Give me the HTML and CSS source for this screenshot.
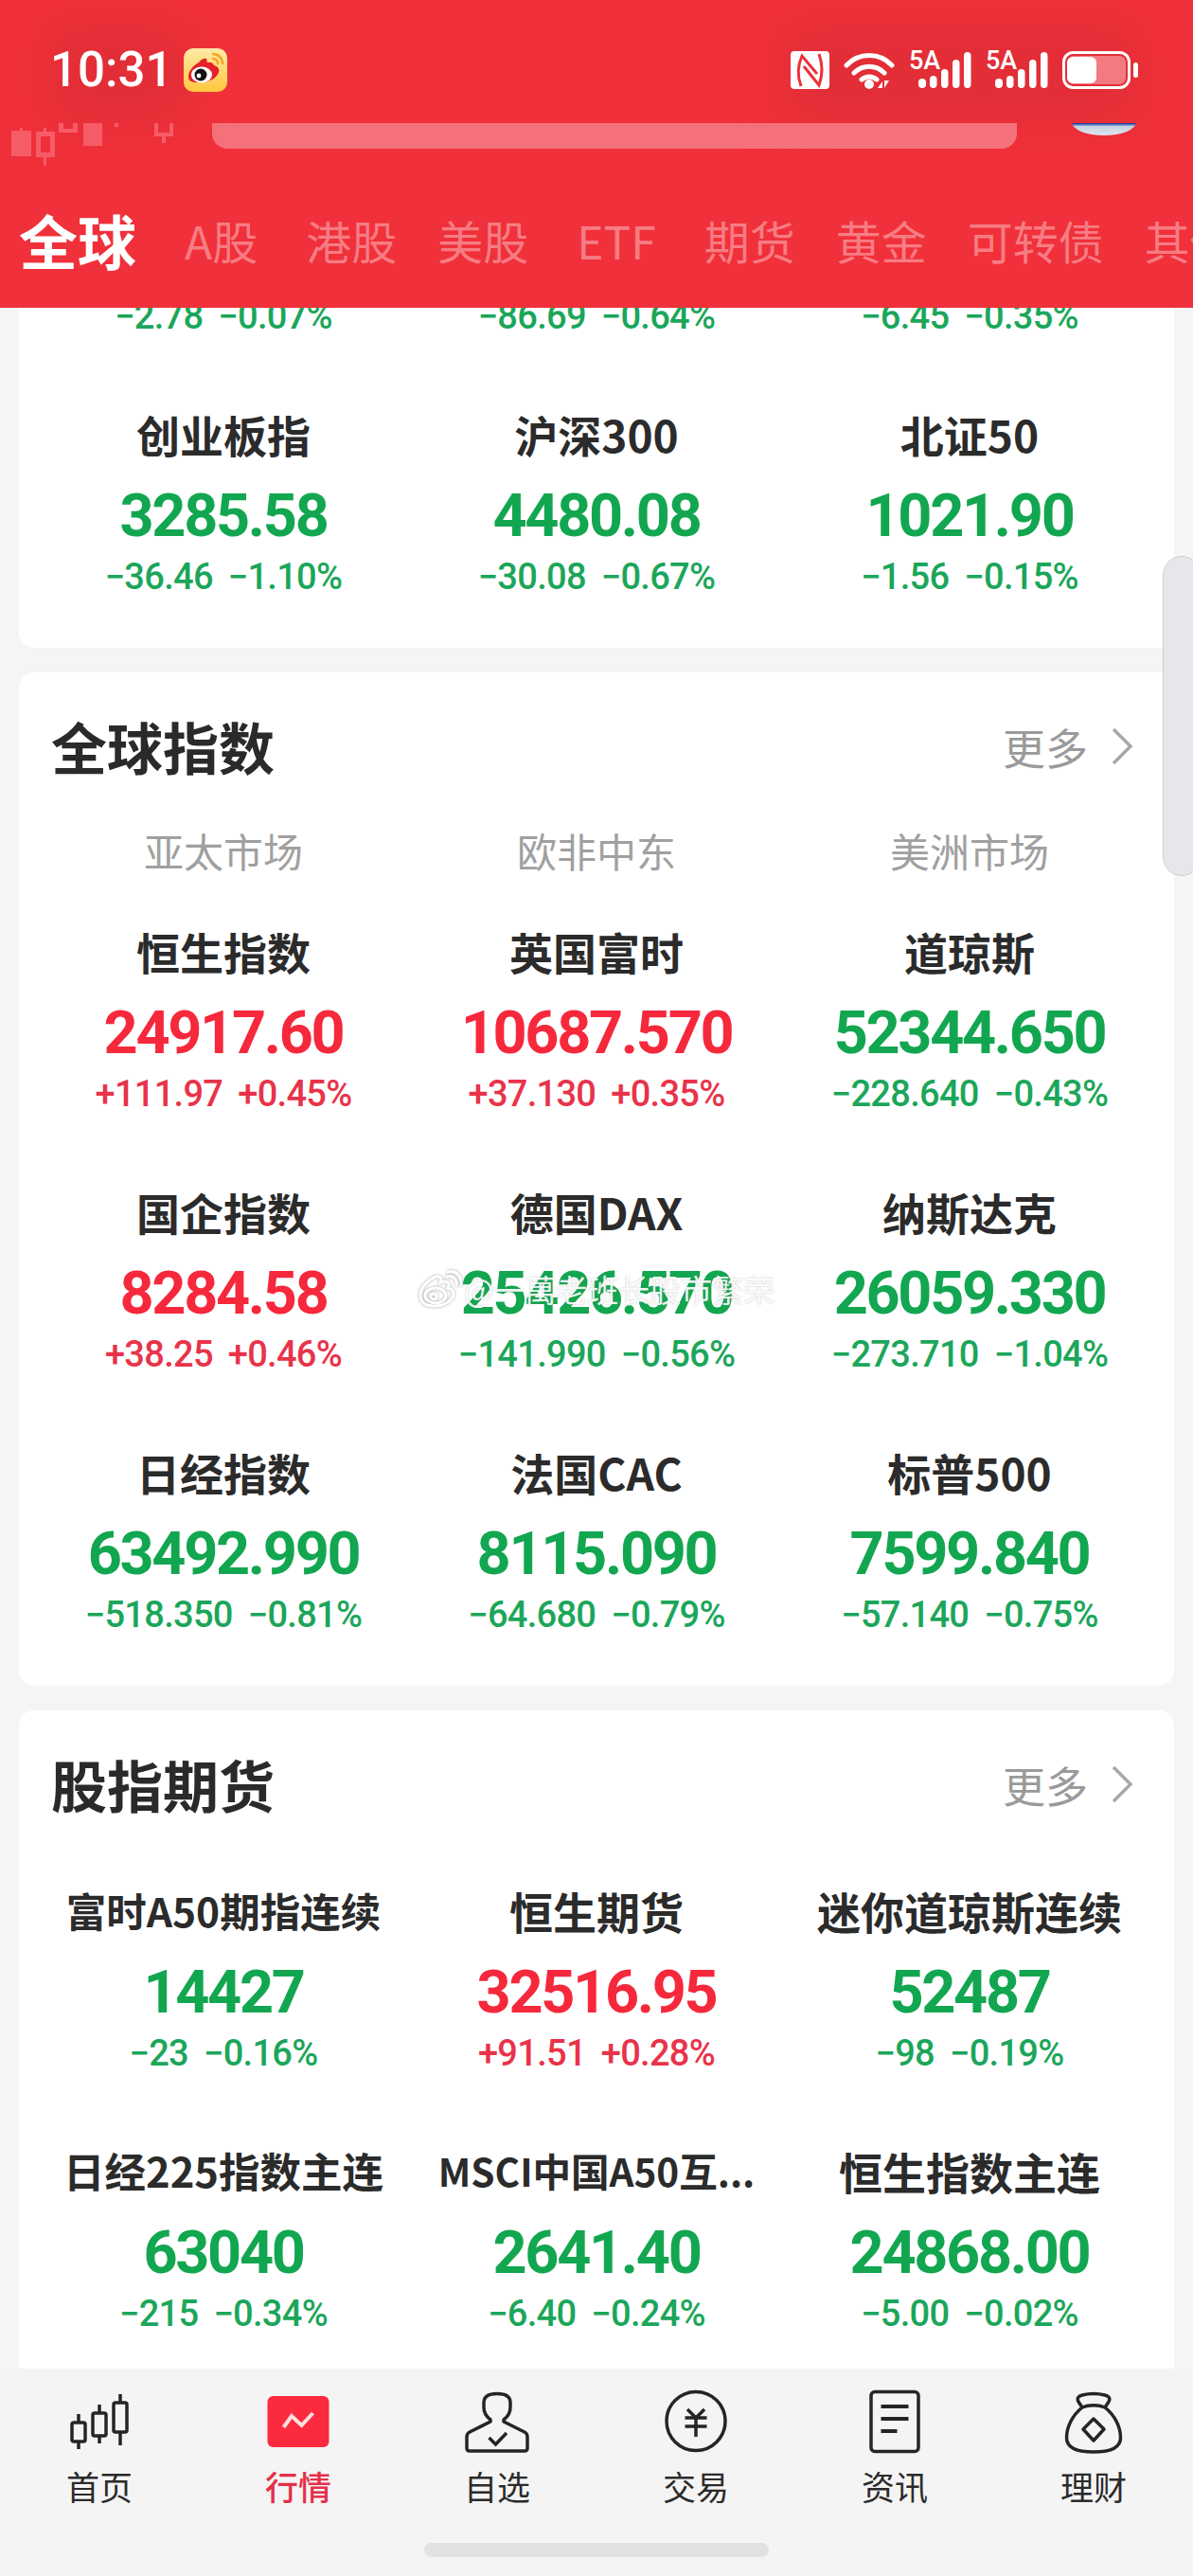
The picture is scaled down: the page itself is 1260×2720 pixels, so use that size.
FILE: index.html
```html
<!DOCTYPE html>
<html lang="zh-CN">
<head>
<meta charset="utf-8">
<title>行情</title>
<link rel="stylesheet" href="styles.css">
</head>
<body>
<div class="app">
  <header class="top">
    <div class="shade shade-left"></div>
    <div class="shade shade-right"></div>
    <div class="status">
      <div class="status-left">
        <span class="clock">10:31</span>
        <svg class="weibo-app" viewBox="0 0 46 46" width="46" height="46">
          <defs><linearGradient id="wy" x1="0" y1="0" x2="0" y2="1"><stop offset="0" stop-color="#ffeaa6"/><stop offset="1" stop-color="#ffc83c"/></linearGradient></defs>
          <rect width="46" height="46" rx="10" fill="url(#wy)"/>
          <path d="M31 6a10 10 0 0 1 10 10M31 11a5 5 0 0 1 5 5" fill="none" stroke="#f5a623" stroke-width="2.6" stroke-linecap="round"/>
          <path d="M5 30c0-6 5-12 11-15 1.500-3 6-5 8-4 1 1 0 3 1 4 3-1 6 0 7 3 4 1 6 4 5 7-1 5-9 11-18 11S5 36 5 30z" fill="#e5202c"/>
          <ellipse cx="19" cy="28" rx="11" ry="8.500" fill="#fff"/>
          <circle cx="18" cy="28" r="6.500" fill="#111"/>
          <circle cx="16" cy="29" r="2.400" fill="#fff"/>
        </svg>
      </div>
      <div class="status-right">
        <svg viewBox="0 0 41 40" width="41" height="40">
          <rect width="41" height="40" rx="4" fill="#fff"/>
          <path d="M11 37C7 26 8 14 12 5l16 19M30 3c4 11 4 22 0 33L14 16" fill="none" stroke="#ee3039" stroke-width="3"/>
        </svg>
        <svg class="wifi" viewBox="0 0 54 40" width="54" height="40">
          <path d="M3 15C16 1 38 1 51 15M11 23c9-9 23-9 32 0M19 30c5-4 11-4 16 0" fill="none" stroke="#fff" stroke-width="5" stroke-linecap="round"/>
          <circle cx="27" cy="35" r="5" fill="#fff"/>
          <path d="M36 39l5-7v7zM43 31l0 8 5-8z" fill="#fff"/>
        </svg>
        <div class="signal"><span class="net">5A</span><svg viewBox="0 0 66 40" width="66" height="40"><g fill="#fff"><rect x="10" y="29" width="8" height="10" rx="4"/><rect x="22" y="26" width="7.500" height="13" rx="3.700"/><rect x="34" y="19" width="7.500" height="20" rx="3.700"/><rect x="46" y="9" width="7.500" height="30" rx="3.700"/><rect x="58" y="1" width="7.500" height="38" rx="3.700"/></g></svg></div>
        <div class="signal"><span class="net">5A</span><svg viewBox="0 0 66 40" width="66" height="40"><g fill="#fff"><rect x="10" y="29" width="8" height="10" rx="4"/><rect x="22" y="26" width="7.500" height="13" rx="3.700"/><rect x="34" y="19" width="7.500" height="20" rx="3.700"/><rect x="46" y="9" width="7.500" height="30" rx="3.700"/><rect x="58" y="1" width="7.500" height="38" rx="3.700"/></g></svg></div>
        <svg class="battery" viewBox="0 0 81 40" width="81" height="40">
          <rect x="1.500" y="1.500" width="69" height="37" rx="10" fill="none" stroke="#fff" stroke-width="3"/>
          <rect x="5" y="5" width="62" height="30" rx="7" fill="#f47a82"/>
          <rect x="5" y="6" width="31" height="28" rx="6" fill="#fff"/>
          <rect x="75" y="12" width="5" height="16" rx="2.500" fill="#fff"/>
        </svg>
      </div>
    </div>
    <div class="strip">
      <svg class="strip-logo" viewBox="0 0 224 45" width="224" height="45">
        <g fill="#f65c67">
          <rect x="12" y="8" width="21" height="27"/><rect x="21" y="5" width="3" height="3"/>
          <path fill-rule="evenodd" d="M38 9h8V5h3v4h9v27h-9v9h-3v-9h-8zM43 14v17h10V14z"/>
          <path d="M62 0h5v6h10V0h5v10H62z"/>
          <rect x="88" y="0" width="20" height="24"/>
          <rect x="121" y="0" width="4" height="4"/>
          <path d="M163 0h4v10h12V0h4v14h-8v7h-4v-7h-8z"/>
        </g>
      </svg>
      <div class="searchbox"></div>
      <div class="avatar"></div>
    </div>
    <nav class="tabs">
      <span class="tab tab-on">全球</span>
      <span class="tab">A股</span>
      <span class="tab tab-wide">港股</span>
      <span class="tab tab-tight">美股</span>
      <span class="tab tab-wide">ETF</span>
      <span class="tab tab-wide">期货</span>
      <span class="tab tab-tight">黄金</span>
      <span class="tab tab-tight">可转债</span>
      <span class="tab tab-tight">其他</span>
    </nav>
  </header>

  <main class="scroll">
    <section class="card card-first">
      <div class="grid">
        <div class="chg dn clipped"><span>−2.78</span><span>−0.07%</span></div>
        <div class="chg dn clipped"><span>−86.69</span><span>−0.64%</span></div>
        <div class="chg dn clipped"><span>−6.45</span><span>−0.35%</span></div>
        <div class="quote"><div class="name">创业板指</div><div class="val dn">3285.58</div><div class="chg dn"><span>−36.46</span><span>−1.10%</span></div></div>
        <div class="quote"><div class="name">沪深300</div><div class="val dn">4480.08</div><div class="chg dn"><span>−30.08</span><span>−0.67%</span></div></div>
        <div class="quote"><div class="name">北证50</div><div class="val dn">1021.90</div><div class="chg dn"><span>−1.56</span><span>−0.15%</span></div></div>
      </div>
    </section>

    <section class="card">
      <div class="card-head">
        <h2 class="title">全球指数</h2>
        <div class="more"><span>更多</span><svg viewBox="0 0 24 40" width="24" height="40"><path d="M3 2l18 18L3 38" fill="none" stroke="#a8a8a8" stroke-width="3.500"/></svg></div>
      </div>
      <div class="grid regions"><div class="region">亚太市场</div><div class="region">欧非中东</div><div class="region">美洲市场</div></div>
      <div class="grid">
        <div class="quote"><div class="name">恒生指数</div><div class="val up">24917.60</div><div class="chg up"><span>+111.97</span><span>+0.45%</span></div></div>
        <div class="quote"><div class="name">英国富时</div><div class="val up">10687.570</div><div class="chg up"><span>+37.130</span><span>+0.35%</span></div></div>
        <div class="quote"><div class="name">道琼斯</div><div class="val dn">52344.650</div><div class="chg dn"><span>−228.640</span><span>−0.43%</span></div></div>
        <div class="quote"><div class="name">国企指数</div><div class="val up">8284.58</div><div class="chg up"><span>+38.25</span><span>+0.46%</span></div></div>
        <div class="quote"><div class="name">德国DAX</div><div class="val dn">25426.570</div><div class="chg dn"><span>−141.990</span><span>−0.56%</span></div></div>
        <div class="quote"><div class="name">纳斯达克</div><div class="val dn">26059.330</div><div class="chg dn"><span>−273.710</span><span>−1.04%</span></div></div>
        <div class="quote"><div class="name">日经指数</div><div class="val dn">63492.990</div><div class="chg dn"><span>−518.350</span><span>−0.81%</span></div></div>
        <div class="quote"><div class="name">法国CAC</div><div class="val dn">8115.090</div><div class="chg dn"><span>−64.680</span><span>−0.79%</span></div></div>
        <div class="quote"><div class="name">标普500</div><div class="val dn">7599.840</div><div class="chg dn"><span>−57.140</span><span>−0.75%</span></div></div>
      </div>
    </section>

    <section class="card">
      <div class="card-head">
        <h2 class="title">股指期货</h2>
        <div class="more"><span>更多</span><svg viewBox="0 0 24 40" width="24" height="40"><path d="M3 2l18 18L3 38" fill="none" stroke="#a8a8a8" stroke-width="3.500"/></svg></div>
      </div>
      <div class="grid futures">
        <div class="quote"><div class="name name-fit42">富时A50期指连续</div><div class="val dn">14427</div><div class="chg dn"><span>−23</span><span>−0.16%</span></div></div>
        <div class="quote"><div class="name">恒生期货</div><div class="val up">32516.95</div><div class="chg up"><span>+91.51</span><span>+0.28%</span></div></div>
        <div class="quote"><div class="name">迷你道琼斯连续</div><div class="val dn">52487</div><div class="chg dn"><span>−98</span><span>−0.19%</span></div></div>
        <div class="quote"><div class="name name-fit43">日经225指数主连</div><div class="val dn">63040</div><div class="chg dn"><span>−215</span><span>−0.34%</span></div></div>
        <div class="quote"><div class="name name-fit40">MSCI中国A50互...</div><div class="val dn">2641.40</div><div class="chg dn"><span>−6.40</span><span>−0.24%</span></div></div>
        <div class="quote"><div class="name">恒生指数主连</div><div class="val dn">24868.00</div><div class="chg dn"><span>−5.00</span><span>−0.02%</span></div></div>
      </div>
    </section>
  </main>

  <footer class="tabbar">
    <div class="nav">
      <div class="nav-item">
        <svg viewBox="0 0 80 70" width="80" height="70"><g fill="none" stroke="#252525" stroke-width="3.500"><path d="M18 27v37M40 17v41M62 6v54" /><rect x="11" y="36" width="14" height="20" rx="2" fill="#f4f4f4"/><rect x="33" y="26" width="14" height="24" rx="2" fill="#f4f4f4"/><rect x="55" y="15" width="14" height="31" rx="2" fill="#f4f4f4"/></g></svg>
        <span>首页</span>
      </div>
      <div class="nav-item nav-on">
        <svg viewBox="0 0 80 70" width="80" height="70"><rect x="7.500" y="8" width="65" height="54" rx="6" fill="#fb2a3e"/><path d="M24.500 41L33 29l10.500 10L55.500 26" fill="none" stroke="#ffdde0" stroke-width="4"/></svg>
        <span>行情</span>
      </div>
      <div class="nav-item">
        <svg viewBox="0 0 80 70" width="80" height="70"><path d="M33 33c-4-3-7-7-7-13v-5C26 8 32 5.500 40 5.500S54 8 54 15v5c0 6-3 10-7 13v2l22 11c2 1 3 3 3 5v12c0 2-1 3-3 3H11c-2 0-3-1-3-3V51c0-2 1-4 3-5l22-11z" fill="none" stroke="#252525" stroke-width="3.500" stroke-linejoin="round"/><path d="M31.500 52l7 7 11.500-12" fill="none" stroke="#252525" stroke-width="3.500"/></svg>
        <span>自选</span>
      </div>
      <div class="nav-item">
        <svg viewBox="0 0 80 70" width="80" height="70"><g fill="none" stroke="#252525"><circle cx="40" cy="34.500" r="31" stroke-width="3.500"/><path d="M31 22l9 9 9-9M28.500 31h23M28.500 40h23M40 31v20" stroke-width="3.500"/></g></svg>
        <span>交易</span>
      </div>
      <div class="nav-item">
        <svg viewBox="0 0 80 70" width="80" height="70"><g fill="none" stroke="#252525"><rect x="15" y="3.500" width="50" height="63" rx="4" stroke-width="3.500"/><path d="M25.500 19h29M25.500 32h29M25.500 45h17" stroke-width="4"/></g></svg>
        <span>资讯</span>
      </div>
      <div class="nav-item">
        <svg viewBox="0 0 80 70" width="80" height="70"><g fill="none" stroke="#252525" stroke-width="3.500" stroke-linejoin="round"><path d="M28 20C18 28 11.500 40 11.500 52c0 12 12.500 15 28.500 15s28.500-3 28.500-15C68.500 40 62 28 52 20c-7-3-17-3-24 0z"/><path d="M28 20l-4-6c-2-4 0-6 4-7 8-2 16-2 24 0 4 1 6 3 4 7l-4 6"/><path d="M40 32l11 11-11 12-11-12z"/></g></svg>
        <span>理财</span>
      </div>
    </div>
    <div class="home-bar"></div>
  </footer>

  <div class="side-handle"></div>

  <div class="watermark">
    <svg viewBox="0 0 46 40" width="46" height="40"><g fill="none" stroke="#fff" stroke-width="3"><path d="M2 26c0-6 6-14 14-18 6-3 9 0 7 5 7-2 11 1 8 6 4 1 6 3 6 6 0 6-9 13-20 13S2 33 2 26z"/><ellipse cx="18" cy="27" rx="11" ry="8"/><circle cx="16" cy="28" r="3"/><path d="M30 7c6-2 11 3 10 9M31 2c9-2 15 5 14 14" stroke-linecap="round"/></g></svg>
    <span>@一萬老班长股市繁荣</span>
  </div>
</div>
</body>
</html>
```

FILE: styles.css
```css
* { box-sizing: border-box; margin: 0; padding: 0; }

html, body { background: #f5f5f5; }

body {
  font-family: "Noto Sans CJK SC", "Noto Sans", sans-serif;
  color: #2a2a2a;
}

.app {
  position: relative;
  width: 1260px;
  height: 2720px;
  display: flex;
  flex-direction: column;
  overflow: hidden;
  background: #f5f5f5;
}

/* ---------- red header ---------- */
.top {
  position: relative;
  flex: 0 0 325px;
  background: #f0303a;
  overflow: hidden;
}

.shade {
  position: absolute;
  top: 25px;
  height: 105px;
  background: #e22e37;
  filter: blur(22px);
}
.shade-left { left: 50px; width: 150px; }
.shade-right { left: 830px; width: 370px; }

.status {
  position: relative;
  height: 130px;
  display: flex;
  justify-content: space-between;
  align-items: flex-start;
  padding: 51px 57px 0 53px;
}

.status-left { display: flex; align-items: center; gap: 12px; }

.clock {
  font-family: Roboto, sans-serif;
  font-size: 51px;
  font-weight: 500;
  line-height: 46px;
  color: #fff;
}

.status-right { display: flex; align-items: flex-start; gap: 15px; padding-top: 3px; }

.signal { position: relative; width: 66px; height: 40px; }
.signal svg { display: block; }
.net {
  position: absolute;
  left: 0;
  top: -4px;
  font-family: Roboto, sans-serif;
  font-size: 27px;
  font-weight: 500;
  line-height: 28px;
  color: #fff;
}

.strip {
  position: relative;
  height: 27px;
  overflow: visible;
}
.strip-logo { position: absolute; left: 0; top: 0; overflow: hidden; }
.searchbox {
  position: absolute;
  left: 224px;
  top: 0;
  width: 850px;
  height: 27px;
  background: #f57179;
  border-radius: 0 0 16px 16px;
}
.avatar {
  position: absolute;
  left: 1132px;
  top: -50px;
  width: 68px;
  height: 63px;
  border-radius: 0 0 34px 34px / 0 0 14px 14px;
  background: linear-gradient(#1c3fa8 0, #1c3fa8 80%, #c5d4e4 85%, #dfe6ea 100%);
  clip-path: inset(50px 0 0 0);
}

.tabs {
  position: relative;
  display: flex;
  align-items: center;
  gap: 47px;
  margin-top: 48px;
  padding-left: 20px;
  line-height: 96px;
  white-space: nowrap;
}
.tab { font-size: 48px; color: #f77c83; flex: none; }
.tab-wide { margin-left: 4px; }
.tab-tight { margin-left: -4px; }
.tab-on { font-size: 62px; font-weight: 700; color: #fff; margin-right: 4px; }

/* ---------- scrolling content ---------- */
.scroll {
  flex: 1 1 0;
  min-height: 0;
  overflow: hidden;
  padding: 0 20px;
}

.card {
  background: #fff;
  border-radius: 16px;
  margin-bottom: 26px;
  padding: 48px 0 52px;
}
.card-first {
  padding: 0 0 52px;
  border-radius: 0 0 16px 16px;
}

.card-head {
  display: flex;
  justify-content: space-between;
  align-items: center;
  height: 60px;
  padding: 0 43px 0 34px;
}
.title { font-size: 59px; line-height: 60px; font-weight: 700; }
.more { display: flex; align-items: center; gap: 24px; font-size: 45px; color: #9a9a9a; }
.more svg { flex: none; }

.grid {
  display: grid;
  grid-template-columns: repeat(3, 1fr);
  padding: 0 19px;
  row-gap: 74px;
  justify-items: center;
}
.regions { margin: 55px 0 54px; }
.futures { margin-top: 76px; }

.region { font-size: 42px; line-height: 50px; color: #a0a0a0; }

.quote { display: flex; flex-direction: column; align-items: center; min-width: 0; }

.name {
  font-size: 46px;
  line-height: 54px;
  font-weight: 700;
  color: #2b2b2b;
  white-space: nowrap;
}
.name-fit43 { font-size: 43.5px; }
.name-fit42 { font-size: 42.5px; }
.name-fit40 { font-size: 40.5px; }

.val {
  font-family: Roboto, sans-serif;
  font-size: 63px;
  line-height: 70px;
  font-weight: 700;
  letter-spacing: -2.3px;
  margin-top: 25px;
}

.chg {
  display: flex;
  gap: 16px;
  font-family: Roboto, sans-serif;
  font-size: 38px;
  font-weight: 500;
  line-height: 46px;
  letter-spacing: -0.7px;
  margin-top: 6px;
}

.chg.clipped { margin-top: -14px; }

.up { color: #f6283c; }
.dn { color: #12a650; }
.chg.up { color: #e8334a; }
.chg.dn { color: #1ba65a; }

/* ---------- bottom navigation ---------- */
.tabbar {
  position: relative;
  flex: 0 0 219px;
  background: #f4f4f4;
  padding-top: 21px;
  display: flex;
  flex-direction: column;
  align-items: center;
}
.nav { display: grid; grid-template-columns: repeat(6, 210px); width: 1260px; }
.nav-item { display: flex; flex-direction: column; align-items: center; }
.nav-item svg { display: block; }
.nav-item span {
  font-size: 35px;
  line-height: 44px;
  margin-top: 11px;
  color: #2b2b2b;
}
.nav-on span { color: #e5304a; font-weight: 500; }

.home-bar {
  width: 364px;
  height: 15px;
  border-radius: 8px;
  background: #e2e2e2;
  margin-top: 38px;
}

/* ---------- overlays ---------- */
.side-handle {
  position: absolute;
  left: 1228px;
  top: 587px;
  width: 40px;
  height: 338px;
  background: #e6e7ea;
  border: 1.5px solid #cfcfd2;
  border-radius: 26px;
}

.watermark {
  position: absolute;
  left: 442px;
  top: 1341px;
  display: flex;
  align-items: center;
  gap: 2px;
  font-size: 33px;
  line-height: 40px;
  color: rgba(255, 255, 255, 0.92);
  text-shadow: 0 0 2px rgba(120, 120, 120, 0.45);
  white-space: nowrap;
}
.watermark svg { opacity: 0.9; filter: drop-shadow(0 0 1.5px rgba(90, 90, 90, 0.6)); }
```
